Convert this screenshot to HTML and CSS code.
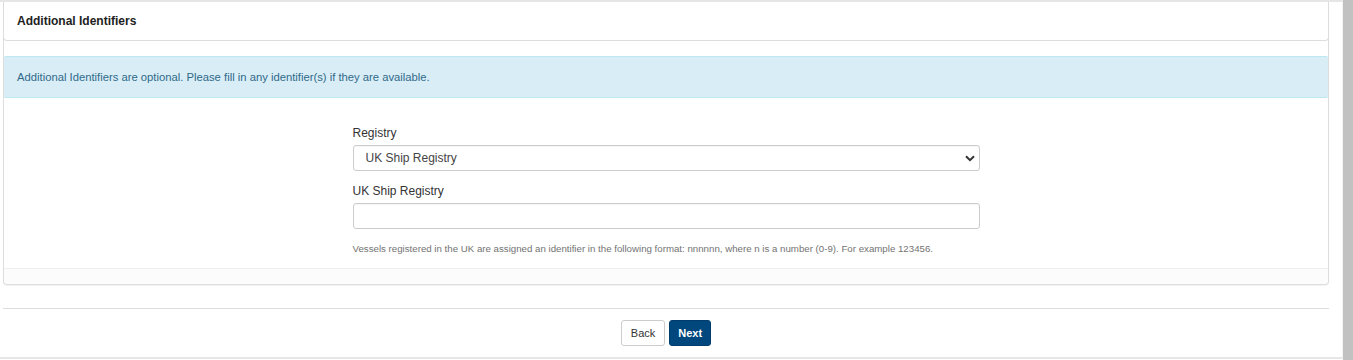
FILE: index.html
```html
<!DOCTYPE html>
<html lang="en">
<head>
      <meta charset="UTF-8">
      <meta name="viewport" content="width=device-width, initial-scale=1.0">
      <title>Additional Identifiers</title>
      <link rel="stylesheet" href="styles.css">
</head>
<body>
      <div class="screen">
            <main class="page">
                  <section class="panel">
                        <header class="panel-heading">
                              <h3 class="panel-title">Additional Identifiers</h3>
                        </header>
                        <div class="panel-body">
                              <div class="alert">Additional Identifiers are optional. Please fill in any identifier(s) if they are available.</div>
                              <form class="form">
                                    <div class="form-group">
                                          <label for="registry">Registry</label>
                                          <div class="select-wrap">
                                                <select id="registry" class="form-control">
                                                      <option>UK Ship Registry</option>
                                                </select>
                                                <svg class="chevron" width="10" height="7" viewBox="0 0 10 7"><path d="M1 1.2 L5 5.2 L9 1.2" fill="none" stroke="#333" stroke-width="2"/></svg>
                                          </div>
                                    </div>
                                    <div class="form-group">
                                          <label for="ukship">UK Ship Registry</label>
                                          <input id="ukship" class="form-control" type="text">
                                          <p class="help">Vessels registered in the UK are assigned an identifier in the following format: nnnnnn, where n is a number (0-9). For example 123456.</p>
                                    </div>
                              </form>
                        </div>
                        <footer class="panel-footer"></footer>
                  </section>
                  <div class="actions">
                        <button class="btn btn-default" type="button">Back</button>
                        <button class="btn btn-primary" type="button">Next</button>
                  </div>
            </main>
            <div class="scrollbar"></div>
      </div>
</body>
</html>
```
FILE: styles.css
```css
html{
      box-sizing: border-box;
}
*, *:after, *:before{
      box-sizing: inherit;
}
body{
      margin: 0;
      font-family: "Liberation Sans", Arial, sans-serif;
      font-size: 12px;
      color: #333;
      background: #fff;
}
.screen{
      display: flex;
      height: 360px;
      overflow: hidden;
}
.page{
      width: 1343px;
      border-top: 2px solid #e6e6e6;
      border-bottom: 2px solid #e6e6e6;
      border-right: 1px solid #f2f2f2;
      height: 359px;
}
.scrollbar{
      width: 10px;
      background: #c1c1c1;
}
.panel{
      margin: 0 13px 0 3px;
      border: 1px solid #ddd;
      border-top: none;
      border-radius: 0 0 4px 4px;
      box-shadow: 0 1px 1px rgba(0,0,0,.05);
}
.panel-heading{
      height: 39px;
      padding: 0 13px;
      display: flex;
      align-items: center;
      border: 1px solid #ddd;
      border-top: none;
      margin: 0 -1px;
      border-radius: 0 0 4px 4px;
}
.panel-title{
      margin: 0;
      font-size: 12px;
      font-weight: bold;
      color: #222;
}
.panel-body{
      padding-top: 15px;
}
.alert{
      height: 42px;
      padding: 0 13px;
      display: flex;
      align-items: center;
      background: #d9edf7;
      border: 1px solid #bce8f1;
      border-left: none;
      border-right: none;
      border-radius: 2px;
      color: #2f6a88;
      font-size: 11.25px;
}
.form{
      width: 627px;
      margin: 0 auto;
      padding-top: 27px;
}
.form-group{
      margin-bottom: 12px;
}
.form-group label{
      display: block;
      line-height: 17px;
      margin-bottom: 3px;
}
.select-wrap{
      position: relative;
}
.chevron{
      position: absolute;
      right: 5px;
      top: 10px;
      pointer-events: none;
}
.form-control{
      display: block;
      width: 100%;
      height: 26px;
      padding: 0 12px;
      border: 1px solid #ccc;
      border-radius: 3px;
      font-family: inherit;
      font-size: 12px;
      color: #444;
      background: #fff;
      appearance: none;
      -webkit-appearance: none;
      box-shadow: inset 0 1px 1px rgba(0,0,0,.04);
}
.help{
      margin: 13px 0 0;
      font-size: 9.7px;
      color: #737373;
      line-height: 14px;
}
.panel-footer{
      height: 16px;
      border-top: 1px solid #eee;
      background: #fcfcfc;
      border-radius: 0 0 4px 4px;
}
.actions{
      margin: 23px 13px 0 3px;
      border-top: 1px solid #ddd;
      padding-top: 11px;
      display: flex;
      justify-content: center;
      gap: 4px;
}
.btn{
      height: 26px;
      padding: 0 8px;
      border-radius: 3px;
      font-family: inherit;
      font-size: 11px;
      border: 1px solid #ccc;
}
.btn-default{
      padding: 0 9px;
      background: #fff;
      color: #333;
}
.btn-primary{
      background: #00477e;
      border-color: #003d6c;
      color: #fff;
      font-weight: bold;
}
```
